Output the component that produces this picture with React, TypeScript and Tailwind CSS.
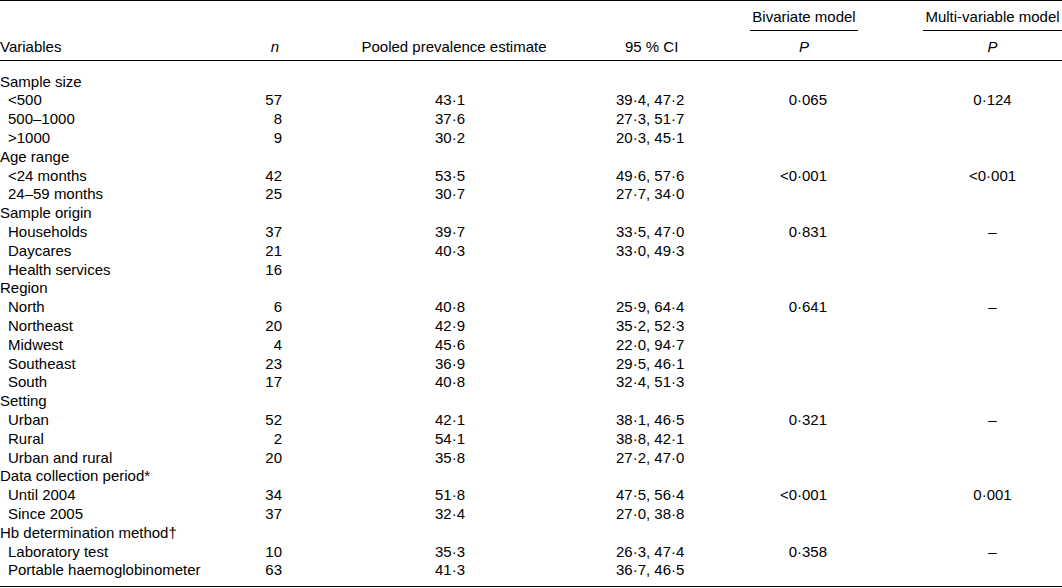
import React from 'react';

type Row = {
  label: string;
  group?: boolean;
  n?: string;
  est?: string;
  ci?: string;
  biv?: string;
  multi?: string;
};

const rows: Row[] = [
  { label: 'Sample size', group: true },
  { label: '<500', n: '57', est: '43·1', ci: '39·4, 47·2', biv: '0·065', multi: '0·124' },
  { label: '500–1000', n: '8', est: '37·6', ci: '27·3, 51·7' },
  { label: '>1000', n: '9', est: '30·2', ci: '20·3, 45·1' },
  { label: 'Age range', group: true },
  { label: '<24 months', n: '42', est: '53·5', ci: '49·6, 57·6', biv: '<0·001', multi: '<0·001' },
  { label: '24–59 months', n: '25', est: '30·7', ci: '27·7, 34·0' },
  { label: 'Sample origin', group: true },
  { label: 'Households', n: '37', est: '39·7', ci: '33·5, 47·0', biv: '0·831', multi: '–' },
  { label: 'Daycares', n: '21', est: '40·3', ci: '33·0, 49·3' },
  { label: 'Health services', n: '16' },
  { label: 'Region', group: true },
  { label: 'North', n: '6', est: '40·8', ci: '25·9, 64·4', biv: '0·641', multi: '–' },
  { label: 'Northeast', n: '20', est: '42·9', ci: '35·2, 52·3' },
  { label: 'Midwest', n: '4', est: '45·6', ci: '22·0, 94·7' },
  { label: 'Southeast', n: '23', est: '36·9', ci: '29·5, 46·1' },
  { label: 'South', n: '17', est: '40·8', ci: '32·4, 51·3' },
  { label: 'Setting', group: true },
  { label: 'Urban', n: '52', est: '42·1', ci: '38·1, 46·5', biv: '0·321', multi: '–' },
  { label: 'Rural', n: '2', est: '54·1', ci: '38·8, 42·1' },
  { label: 'Urban and rural', n: '20', est: '35·8', ci: '27·2, 47·0' },
  { label: 'Data collection period*', group: true },
  { label: 'Until 2004', n: '34', est: '51·8', ci: '47·5, 56·4', biv: '<0·001', multi: '0·001' },
  { label: 'Since 2005', n: '37', est: '32·4', ci: '27·0, 38·8' },
  { label: 'Hb determination method†', group: true },
  { label: 'Laboratory test', n: '10', est: '35·3', ci: '26·3, 47·4', biv: '0·358', multi: '–' },
  { label: 'Portable haemoglobinometer', n: '63', est: '41·3', ci: '36·7, 46·5' },
];

const cols = 'grid grid-cols-[200px_100px_300px_150px_108px_65px_139px]';

export default function App() {
  return (
    <div className="w-[1062px] h-[588px] bg-white text-black font-['Liberation_Sans',Arial,sans-serif] text-[15px] leading-[18.8px] whitespace-nowrap">
      <div className="border-t border-black" />

      {/* Header: model group titles */}
      <div className={cols}>
        <div />
        <div />
        <div />
        <div />
        <div className="pt-[7px] pb-[3px] border-b border-black text-center">Bivariate model</div>
        <div />
        <div className="pt-[7px] pb-[3px] border-b border-black text-center">Multi-variable model</div>
      </div>

      {/* Header: column names */}
      <div className={`${cols} pt-[7px] pb-[3px] border-b border-black`}>
        <div>Variables</div>
        <div className="text-right pr-[21px] italic">n</div>
        <div className="text-center pl-2">Pooled prevalence estimate</div>
        <div className="pl-[25px]">95 % CI</div>
        <div className="text-center italic">P</div>
        <div />
        <div className="text-center italic">P</div>
      </div>

      {/* Body */}
      <div className="pt-[12px] pb-[6px] border-b border-black">
        {rows.map((r) => (
          <div key={r.label} className={`${cols} h-[18.8px]`}>
            <div className={r.group ? '' : 'pl-2'}>{r.label}</div>
            <div className="text-right pr-[18px]">{r.n}</div>
            <div className="text-center">{r.est}</div>
            <div className="pl-4">{r.ci}</div>
            <div className="text-right pr-[31px]">{r.biv}</div>
            <div />
            <div className="text-center">{r.multi}</div>
          </div>
        ))}
      </div>
    </div>
  );
}
